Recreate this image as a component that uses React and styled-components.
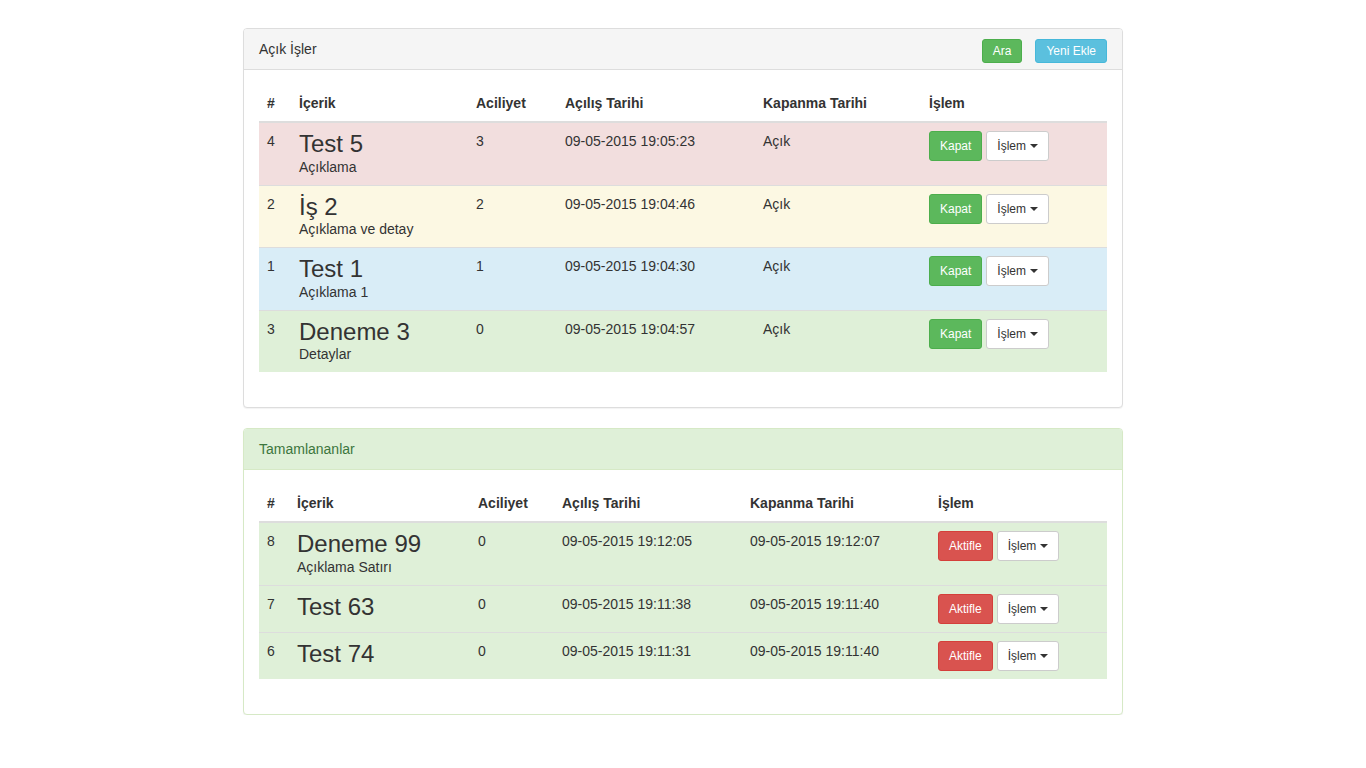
import React from "react";
import styled, { createGlobalStyle, css } from "styled-components";

const Global = createGlobalStyle`
  html, body { margin: 0; padding: 0; background: #fff; }
  body {
    font-family: "Liberation Sans", Arial, sans-serif;
    font-size: 14px;
    line-height: 1.42857143;
    color: #333;
  }
  * { box-sizing: border-box; }
`;

const Page = styled.div`
  width: 880px;
  margin: 0 auto;
  padding-top: 28px;
  display: flex;
  flex-direction: column;
  gap: 20px;
`;

const variants = {
  default: { border: "#ddd", bg: "#f5f5f5", color: "#333" },
  success: { border: "#d6e9c6", bg: "#dff0d8", color: "#3c763d" },
};

const Panel = styled.section`
  background: #fff;
  border: 1px solid ${(p) => variants[p.$variant].border};
  border-radius: 4px;
  box-shadow: 0 1px 1px rgba(0, 0, 0, 0.05);
`;

const PanelHeading = styled.header`
  display: flex;
  justify-content: space-between;
  align-items: flex-start;
  padding: 10px 15px;
  height: 41px;
  background: ${(p) => variants[p.$variant].bg};
  color: ${(p) => variants[p.$variant].color};
  border-bottom: 1px solid ${(p) => variants[p.$variant].border};
  border-radius: 3px 3px 0 0;
`;

const PanelTitle = styled.span`
  line-height: 20px;
`;

const HeadingActions = styled.div`
  display: flex;
  gap: 13px;
`;

const PanelBody = styled.div`
  padding: 15px 15px 35px;
`;

const btnColors = {
  success: { bg: "#5cb85c", border: "#4cae4c", color: "#fff" },
  info: { bg: "#5bc0de", border: "#46b8da", color: "#fff" },
  danger: { bg: "#d9534f", border: "#d43f3a", color: "#fff" },
  default: { bg: "#fff", border: "#ccc", color: "#333" },
};

const Button = styled.button`
  font-family: inherit;
  font-size: 12px;
  line-height: 18px;
  padding: ${(p) => (p.$compact ? "2px 10px" : "5px 10px")};
  border-radius: 3px;
  border: 1px solid ${(p) => btnColors[p.$kind].border};
  background: ${(p) => btnColors[p.$kind].bg};
  color: ${(p) => btnColors[p.$kind].color};
  cursor: pointer;
  display: inline-flex;
  align-items: center;
  white-space: nowrap;
  ${(p) =>
    p.$compact &&
    css`
      margin-bottom: -4px;
    `}
`;

const Caret = styled.span`
  display: inline-block;
  width: 0;
  height: 0;
  margin-left: 4px;
  border-top: 4px solid #333;
  border-left: 4px solid transparent;
  border-right: 4px solid transparent;
`;

const Table = styled.table`
  width: 100%;
  border-collapse: collapse;
  border-spacing: 0;
  table-layout: fixed;
`;

const Col = styled.col`
  width: ${(p) => p.$w}px;
`;

const Th = styled.th`
  text-align: left;
  font-weight: bold;
  padding: 8px;
  line-height: 20px;
  vertical-align: bottom;
  border-bottom: 2px solid #ddd;
  white-space: nowrap;
`;

const rowBg = {
  danger: "#f2dede",
  warning: "#fcf8e3",
  info: "#d9edf7",
  success: "#dff0d8",
};

const Tr = styled.tr`
  background: ${(p) => rowBg[p.$state]};
`;

const Td = styled.td`
  padding: 8px;
  line-height: 20px;
  vertical-align: top;
  border-top: 1px solid #ddd;
  white-space: nowrap;
`;

const Tbody = styled.tbody`
  & > tr:first-child > td {
    border-top: 0;
  }
`;

const Title = styled.div`
  font-size: 24px;
  line-height: 25.6px;
  font-weight: 500;
`;

const Desc = styled.div`
  font-size: 14px;
  line-height: 20px;
`;

const Actions = styled.div`
  display: flex;
  gap: 4px;
`;

const openRows = [
  { id: 4, title: "Test 5", desc: "Açıklama", urg: 3, open: "09-05-2015 19:05:23", close: "Açık", state: "danger" },
  { id: 2, title: "İş 2", desc: "Açıklama ve detay", urg: 2, open: "09-05-2015 19:04:46", close: "Açık", state: "warning" },
  { id: 1, title: "Test 1", desc: "Açıklama 1", urg: 1, open: "09-05-2015 19:04:30", close: "Açık", state: "info" },
  { id: 3, title: "Deneme 3", desc: "Detaylar", urg: 0, open: "09-05-2015 19:04:57", close: "Açık", state: "success" },
];

const doneRows = [
  { id: 8, title: "Deneme 99", desc: "Açıklama Satırı", urg: 0, open: "09-05-2015 19:12:05", close: "09-05-2015 19:12:07", state: "success" },
  { id: 7, title: "Test 63", desc: "", urg: 0, open: "09-05-2015 19:11:38", close: "09-05-2015 19:11:40", state: "success" },
  { id: 6, title: "Test 74", desc: "", urg: 0, open: "09-05-2015 19:11:31", close: "09-05-2015 19:11:40", state: "success" },
];

function TaskTable({ rows, widths, actionLabel, actionKind }) {
  const heads = ["#", "İçerik", "Aciliyet", "Açılış Tarihi", "Kapanma Tarihi", "İşlem"];
  return (
    <Table>
      <colgroup>
        {widths.map((w, i) => (
          <Col key={i} $w={w} />
        ))}
      </colgroup>
      <thead>
        <tr>
          {heads.map((h) => (
            <Th key={h}>{h}</Th>
          ))}
        </tr>
      </thead>
      <Tbody>
        {rows.map((r) => (
          <Tr key={r.id} $state={r.state}>
            <Td>{r.id}</Td>
            <Td>
              <Title>{r.title}</Title>
              {r.desc && <Desc>{r.desc}</Desc>}
            </Td>
            <Td>{r.urg}</Td>
            <Td>{r.open}</Td>
            <Td>{r.close}</Td>
            <Td>
              <Actions>
                <Button $kind={actionKind}>{actionLabel}</Button>
                <Button $kind="default">
                  İşlem <Caret />
                </Button>
              </Actions>
            </Td>
          </Tr>
        ))}
      </Tbody>
    </Table>
  );
}

export default function App() {
  return (
    <>
      <Global />
      <Page>
        <Panel $variant="default">
          <PanelHeading $variant="default">
            <PanelTitle>Açık İşler</PanelTitle>
            <HeadingActions>
              <Button $kind="success" $compact>Ara</Button>
              <Button $kind="info" $compact>Yeni Ekle</Button>
            </HeadingActions>
          </PanelHeading>
          <PanelBody>
            <TaskTable
              rows={openRows}
              widths={[32, 177, 89, 198, 166, 186]}
              actionLabel="Kapat"
              actionKind="success"
            />
          </PanelBody>
        </Panel>
        <Panel $variant="success">
          <PanelHeading $variant="success">
            <PanelTitle>Tamamlananlar</PanelTitle>
          </PanelHeading>
          <PanelBody>
            <TaskTable
              rows={doneRows}
              widths={[30, 181, 84, 188, 188, 177]}
              actionLabel="Aktifle"
              actionKind="danger"
            />
          </PanelBody>
        </Panel>
      </Page>
    </>
  );
}
